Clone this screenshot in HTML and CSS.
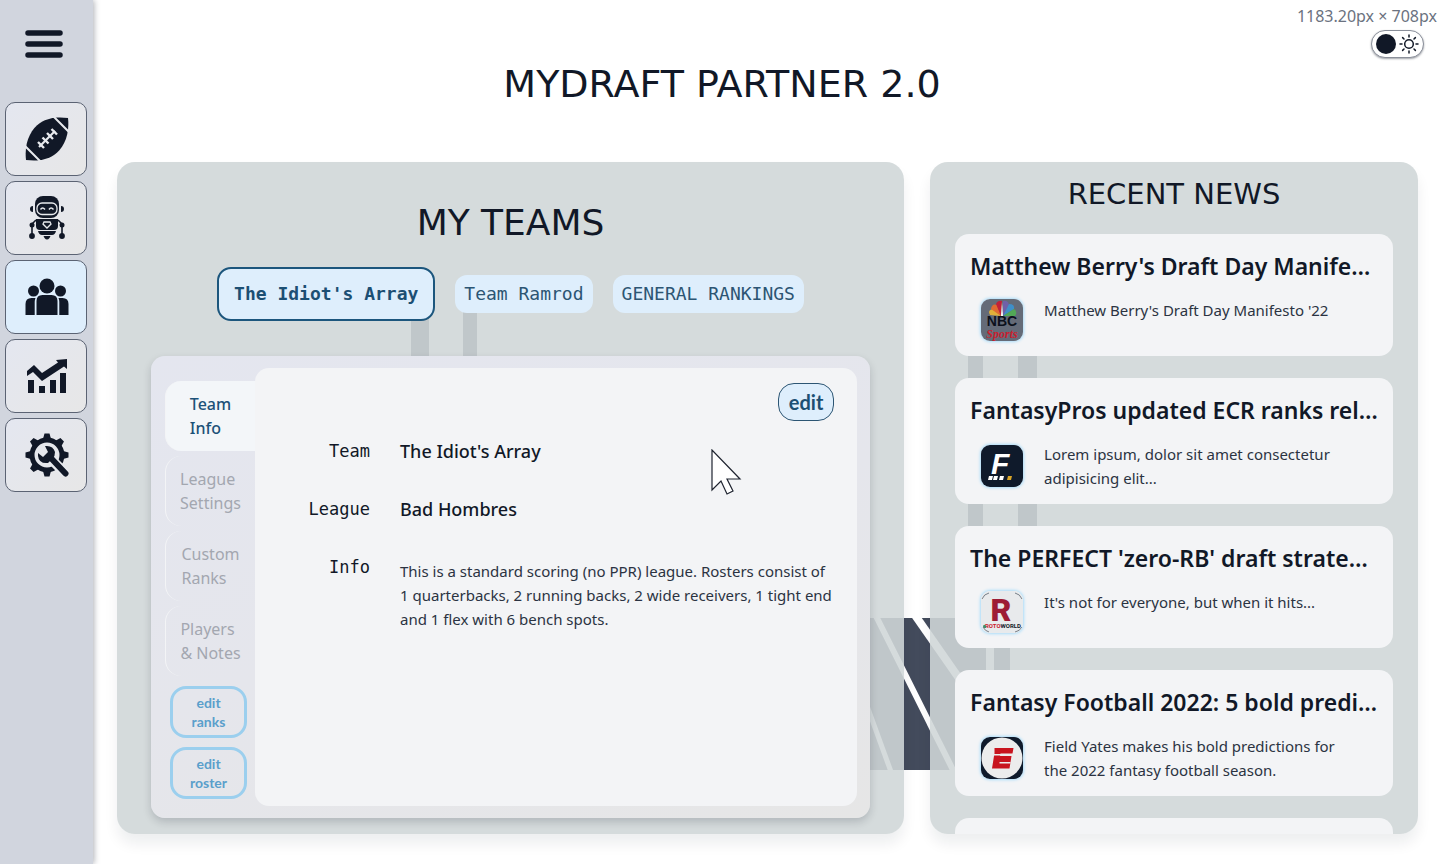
FILE: index.html
```html
<!DOCTYPE html>
<html lang="en">
<head>
<meta charset="utf-8">
<meta name="viewport" content="width=device-width, initial-scale=1">
<title>MyDraft Partner 2.0</title>
<link rel="stylesheet" href="styles.css">
</head>
<body>
<svg class="field-art" width="640" height="480" viewBox="0 0 640 480" aria-hidden="true">
  <g fill="#434b5c">
    <path d="M11 0h18v56H11zM63 0h14v56H63z"/>
    <path d="M568 50h15v178h-15zM618 50h19v178h-19z"/>
    <path d="M430 318h156v152H430zM594 318h16v152h-16z"/>
  </g>
  <g stroke="#fff" fill="none">
    <path d="M472 308L558 480" stroke-width="6"/>
    <path d="M510 308L570 394" stroke-width="8"/>
    <path d="M454 370L494 480" stroke-width="5"/>
  </g>
</svg>
<div class="app">
  <nav class="sidebar" aria-label="Main">
    <button class="menu" type="button" aria-label="Menu">
      <svg width="38" height="28" viewBox="0 0 38 28"><path d="M3 3h32M3 14h32M3 25h32" stroke="#111827" stroke-width="5.5" stroke-linecap="round"/></svg>
    </button>
    <button class="nav-item" type="button" aria-label="Draft">
      <svg width="44" height="44" viewBox="0 0 44 44">
        <path d="M1 43C-1 25 6 12 15 6C24 0 34 0 43 1C45 19 38 32 29 38C20 44 10 44 1 43Z" fill="#111827"/>
        <g stroke="#e8eaee" fill="none"><path d="M28 -1L45 16M-1 28L16 45" stroke-width="2"/><path d="M14 30L30 14" stroke-width="2.2"/><path d="M13 25l6 6M17.500 20.500l6 6M22 16l6 6M26.500 12l5.500 5.500" stroke-width="2.400"/></g>
      </svg>
    </button>
    <button class="nav-item" type="button" aria-label="Bot">
      <svg width="36" height="44" viewBox="0 0 36 44" fill="#111827">
        <rect x="6" y="0" width="24" height="22" rx="8"/><path d="M4 10v6q-3 0-3-3t3-3zM32 10v6q3 0 3-3t-3-3z"/>
        <rect x="8" y="7" width="20" height="11.500" rx="5" fill="none" stroke="#e8eaee" stroke-width="1.300"/>
        <path d="M11.500 13.500q2-3 4.500 0M20 13.500q2-3 4.500 0" fill="none" stroke="#e8eaee" stroke-width="1.500"/>
        <path d="M7 23h22v7q0 4-4 4H11q-4 0-4-4zM9 35h18q-1 4-4 4H13q-3 0-4-4zM14.500 40h7l-1 2q-2.500 3-5 0z"/>
        <path d="M15 26h6l1 2-4 4-4-4z" fill="none" stroke="#e8eaee" stroke-width="1.300"/>
        <path d="M7 24L3 28v10M29 24l4 4v10" fill="none" stroke="#111827" stroke-width="1.600"/><circle cx="3" cy="29" r="2.500"/><circle cx="33" cy="29" r="2.500"/><circle cx="3" cy="40" r="2.900"/><circle cx="33" cy="40" r="2.900"/>
      </svg>
    </button>
    <button class="nav-item active" type="button" aria-label="Teams" aria-current="page">
      <svg width="44" height="38" viewBox="0 0 44 38" fill="#111827">
        <circle cx="22" cy="8" r="7.500"/><circle cx="8.500" cy="13" r="5.500"/><circle cx="35.500" cy="13" r="5.500"/>
        <path d="M11.500 37V23q0-6 6-6h9q6 0 6 6v14zM0.500 37V26q0-6 6-6h4q-.8 2-.8 4v13zM43.500 37V26q0-6-6-6h-4q.8 2 .8 4v13z"/>
      </svg>
    </button>
    <button class="nav-item" type="button" aria-label="Stats">
      <svg width="40" height="34" viewBox="0 0 40 34" fill="#111827">
        <path d="M0 12L7 6 15 14 31 3.500 29 1 40 0v10l-3-2.500L15 22 6 13 0 17zM1 21h6v13H1zM12 27h6v7h-6zM23 21h6v13h-6zM33 14h6v20h-6z"/>
      </svg>
    </button>
    <button class="nav-item" type="button" aria-label="Settings">
      <svg width="44" height="44" viewBox="0 0 44 44">
        <circle cx="22" cy="22" r="15" fill="none" stroke="#111827" stroke-width="5"/>
        <g fill="#111827">
          <path id="tooth" d="M18 6l1.500-5.500h5L26 6z"/>
          <use href="#tooth" transform="rotate(45 22 22)"/><use href="#tooth" transform="rotate(90 22 22)"/><use href="#tooth" transform="rotate(180 22 22)"/><use href="#tooth" transform="rotate(225 22 22)"/><use href="#tooth" transform="rotate(270 22 22)"/><use href="#tooth" transform="rotate(315 22 22)"/>
        </g>
        <path d="M22 22L41 41" stroke="#e8eaee" stroke-width="10"/>
        <path d="M24 23L40.500 40.500" stroke="#111827" stroke-width="6" stroke-linecap="round"/>
        <path d="M20 13q8-1 10 6 0 4-2 6l-5 5q-9 1-10-7v-3l5 4 5-5z" fill="#111827"/>
      </svg>
    </button>
  </nav>
  <main class="main">
    <header class="header">
      <h1>MYDRAFT PARTNER 2.0</h1>
      <div class="corner">
        <span>1183.20px × 708px</span>
        <label class="theme" aria-label="Light theme">
          <input type="checkbox">
          <span class="knob"></span>
          <svg width="20" height="20" viewBox="0 0 20 20" fill="none" stroke="#111827" stroke-width="1.500" stroke-linecap="round"><circle cx="10" cy="10" r="4.300"/><path d="M10 1v2M10 17v2M1 10h2M17 10h2M3.600 3.600L5 5M15 15l1.400 1.400M16.400 3.600L15 5M5 15l-1.400 1.400"/></svg>
        </label>
      </div>
    </header>
    <div class="panels">
      <section class="panel teams">
        <h2>MY TEAMS</h2>
        <div class="team-tabs">
          <button class="team-tab current" type="button">The Idiot's Array</button>
          <button class="team-tab" type="button">Team Ramrod</button>
          <button class="team-tab" type="button">GENERAL RANKINGS</button>
        </div>
        <div class="team-card">
          <div class="side">
            <button class="side-tab current" type="button"><span>Team<br>Info</span></button>
            <button class="side-tab" type="button"><span>League<br>Settings</span></button>
            <button class="side-tab" type="button"><span>Custom<br>Ranks</span></button>
            <button class="side-tab" type="button"><span>Players<br>&amp; Notes</span></button>
            <button class="side-edit" type="button">edit<br>ranks</button>
            <button class="side-edit" type="button">edit<br>roster</button>
          </div>
          <div class="details">
            <button class="edit" type="button">edit</button>
            <dl>
              <dt>Team</dt><dd class="strong">The Idiot's Array</dd>
              <dt>League</dt><dd class="strong">Bad Hombres</dd>
              <dt>Info</dt><dd class="info">This is a standard scoring (no PPR) league. Rosters consist of<br>1 quarterbacks, 2 running backs, 2 wide receivers, 1 tight end<br>and 1 flex with 6 bench spots.</dd>
            </dl>
          </div>
        </div>
      </section>
      <section class="panel news">
        <h2>RECENT NEWS</h2>
        <article class="story">
          <h3>Matthew Berry's Draft Day Manife…</h3>
          <div class="story-row">
            <svg class="logo" viewBox="0 0 42 42" aria-hidden="true"><rect width="42" height="42" fill="#646b78"/>
              <g><path d="M20 17L9 16q-3-5 3-6z" fill="#e0b03a"/><path d="M20 17L10 10q1-6 6-4z" fill="#df6a32"/><path d="M20 17L15 5q2-4 6-3z" fill="#c22138"/><path d="M22 17L22 2q5-1 6 4z" fill="#7060a8"/><path d="M22 17L28 5q6 0 5 5z" fill="#3f8fc8"/><path d="M22 17L33 10q4 3 1 7z" fill="#52a857"/><path d="M20 17L21 3l1 14z" fill="#fff"/></g>
              <text x="21" y="27" text-anchor="middle" class="nbc">NBC</text><text x="21" y="39" text-anchor="middle" class="sports">Sports</text></svg>
            <p>Matthew Berry's Draft Day Manifesto '22</p>
          </div>
        </article>
        <article class="story">
          <h3>FantasyPros updated ECR ranks rel…</h3>
          <div class="story-row">
            <svg class="logo" viewBox="0 0 42 42" aria-hidden="true"><rect width="42" height="42" fill="#0f1a2b"/><text x="10" y="29" class="fp">F</text><path d="M8 31h4l-1 4H7zM13 31h4l-1 4h-4zM19 31h4l-1 4h-4z" fill="#fff"/><path d="M27 31h4l-1 4h-4z" fill="#d9a528"/></svg>
            <p>Lorem ipsum, dolor sit amet consectetur<br>adipisicing elit...</p>
          </div>
        </article>
        <article class="story">
          <h3>The PERFECT 'zero-RB' draft strate…</h3>
          <div class="story-row">
            <svg class="logo" viewBox="0 0 42 42" aria-hidden="true"><rect width="42" height="42" fill="#e8eaec"/><text x="20" y="30" text-anchor="middle" class="roto-r">R</text><text x="22" y="37" text-anchor="middle" class="roto">ROTO<tspan fill="#111827">WORLD</tspan></text><path d="M2 37q0-4 2-3t1 3z" fill="#3f8f6a"/><path d="M1 8q2-5 7-6M34 2q5 1 7 6M2 36q2 4 6 5M34 41q5-1 7-5" fill="none" stroke="#777f88"/></svg>
            <p>It's not for everyone, but when it hits...</p>
          </div>
        </article>
        <article class="story">
          <h3>Fantasy Football 2022: 5 bold predi…</h3>
          <div class="story-row">
            <svg class="logo" viewBox="0 0 42 42" aria-hidden="true"><rect width="42" height="42" fill="#0f1a2b"/><circle cx="21" cy="21" r="20.500" fill="#ececec"/><path d="M13.500 11h19l-1 5.500H19.500L19 19h11.500l-2 12.500H11l2-12.500h0l.5-2.500z" fill="#c8141e"/><path d="M12 17.700h20M18.500 25.700h11" stroke="#ececec" stroke-width="1.500"/></svg>
            <p>Field Yates makes his bold predictions for<br>the 2022 fantasy football season.</p>
          </div>
        </article>
        <article class="story next"></article>
      </section>
    </div>
  </main>
</div>
<svg class="cursor" width="32" height="48" viewBox="0 0 32 48" aria-hidden="true"><path d="M1 1V41L10 32L16 45L22 42L16 30H29Z" fill="#fff" stroke="#1f2430" stroke-width="1.200"/></svg>
</body>
</html>
```
FILE: styles.css
```css
* { box-sizing: border-box; }
body {
  margin: 0;
  background: #fff;
  color: #111827;
  font-family: "Noto Sans", "Open Sans", sans-serif;
  font-size: 16px;
  line-height: 24px;
}
button { font: inherit; color: inherit; margin: 0; padding: 0; border: 0; background: none; cursor: pointer; }
svg { display: block; flex: none; }
h1, h2, h3, p, dl, dd { margin: 0; }

.field-art { position: absolute; left: 400px; top: 300px; z-index: -1; }
.cursor { position: absolute; left: 711px; top: 449px; pointer-events: none; }

.app { display: flex; height: 100vh; min-height: 700px; }
.sidebar {
  flex: none;
  width: 93px;
  padding: 30px 6px 0 5px;
  display: flex;
  flex-direction: column;
  gap: 5px;
  background: #d1d5de;
  box-shadow: 1px 0 6px rgba(17, 24, 39, .35);
}
.menu { align-self: center; margin: 0 4px 39px 0; }
.nav-item {
  height: 74px;
  display: flex;
  align-items: center;
  justify-content: center;
  padding-left: 2px;
  border: 1px solid #5b6373;
  border-radius: 10px;
  background: linear-gradient(135deg, #e4e7f0, #e7e7e7);
}
.nav-item.active { background: #deeefc; }

.main { flex: 1; min-width: 0; display: flex; flex-direction: column; padding: 0 26px 30px 24px; }
/* the title is centred on the window, not on the column beside the sidebar */
.header { flex: none; height: 162px; margin: 0 -26px 0 -117px; padding-top: 60px; text-align: center; pointer-events: none; }
h1, h2 { font-family: "DejaVu Sans", sans-serif; font-weight: 400; }
h1 { font-size: 38px; line-height: 48px; }
.corner {
  position: absolute;
  top: 4px;
  right: 7px;
  display: flex;
  flex-direction: column;
  align-items: flex-end;
  gap: 2px;
  color: #6b7280;
  pointer-events: auto;
}
.theme {
  display: flex;
  align-items: center;
  gap: 3px;
  height: 28px;
  margin-right: 13px;
  padding: 0 4px;
  border: 1px solid #8a8f9a;
  border-radius: 14px;
  background: #fff;
  box-shadow: 0 1px 2px rgba(17, 24, 39, .4);
}
.theme input { position: absolute; opacity: 0; }
.knob { width: 20px; height: 20px; border-radius: 50%; background: #111827; }

.panels { flex: 1; min-height: 0; display: grid; grid-template-columns: 1.613fr 1fr; gap: 26px; }
.panel {
  min-width: 0;
  border-radius: 18px;
  background: rgba(208, 214, 216, .89);
  box-shadow: 0 10px 14px rgba(17, 24, 39, .07);
}

.teams { display: flex; flex-direction: column; padding: 40px 34px 16px; }
.teams h2 { font-size: 36px; line-height: 42px; text-align: center; }
.team-tabs {
  display: flex;
  align-items: center;
  justify-content: center;
  gap: 20px;
  margin: 23px 0 35px;
  font-family: "DejaVu Sans Mono", monospace;
  font-size: 18px;
  color: #2c5573;
}
.team-tab { height: 38px; padding: 0 9px; border-radius: 12px; background: #deeefc; }
.team-tab.current {
  height: 54px;
  padding: 0 15px;
  border: 2px solid #1c567d;
  border-radius: 14px;
  color: #1c4f73;
  font-weight: 700;
}
.team-card {
  flex: 1;
  display: flex;
  padding: 12px 13px 12px 14px;
  border-radius: 14px;
  background: linear-gradient(160deg, #e4e6ef, #e5e6ec 50%, #e6e6e6);
  box-shadow: 0 4px 8px rgba(17, 24, 39, .18);
}
.side { width: 90px; flex: none; display: flex; flex-direction: column; padding-top: 13px; gap: 5px; }
.side-tab {
  height: 70px;
  display: flex;
  align-items: center;
  justify-content: center;
  text-align: left;
  border-left: 1px solid #f3f4f6;
  border-radius: 16px 0 0 16px;
  color: #a3a7b0;
}
.side-tab.current { background: #f3f6f9; color: #1c5178; font-weight: 500; }
.side-edit {
  height: 52px;
  margin: 0 8px 4px 5px;
  border: 3px solid #9bcfee;
  border-radius: 16px;
  color: #5a9fcb;
  font-family: Lato, sans-serif;
  font-size: 14px;
  font-weight: 700;
  line-height: 19px;
}
.side-tab + .side-edit { margin-top: 5px; }
.details { flex: 1; min-width: 0; border-radius: 14px; background: #f3f4f6; padding: 15px 23px 0 0; }
.edit {
  display: block;
  width: 56px;
  height: 38px;
  margin-left: auto;
  border: 1px solid #2c5573;
  border-radius: 16px;
  background: #deeefc;
  color: #1c4f73;
  font-family: Lato, sans-serif;
  font-size: 20px;
  font-weight: 700;
}
dl { display: grid; grid-template-columns: 115px 1fr; column-gap: 30px; row-gap: 34px; margin-top: 18px; }
dt { text-align: right; font-family: "DejaVu Sans Mono", monospace; font-size: 17px; }
.strong { font-size: 18px; font-weight: 500; }
.info { padding-top: 4px; font-size: 15px; color: #2b3342; white-space: nowrap; }

.news { overflow: hidden; padding: 16px 25px 0; }
.news h2 { font-size: 29px; line-height: 32px; text-align: center; margin-bottom: 24px; }
.story { margin-bottom: 22px; padding: 16px 15px 14px; border-radius: 14px; background: #f3f4f6; }
.story h3 { font-size: 23px; line-height: 32px; font-weight: 600; white-space: nowrap; }
.story-row { display: flex; align-items: center; gap: 21px; min-height: 44px; margin-top: 16px; padding-left: 11px; }
.story-row p { align-self: flex-start; font-size: 15px; color: #2b3342; white-space: nowrap; }
.next { height: 122px; }
.logo { width: 42px; height: 42px; border-radius: 9px; box-shadow: 0 0 3px 1px #a9dcf9; }
.nbc { font: 700 14px "Liberation Sans", sans-serif; fill: #0c111c; }
.sports { font: italic 700 12px "Liberation Serif", serif; fill: #c8202e; }
.fp { font: italic 700 30px "Liberation Sans", sans-serif; fill: #fff; }
.roto-r { font: 900 32px Roboto, sans-serif; fill: #9d1c35; }
.roto { font: 700 6px Roboto, sans-serif; fill: #c8202e; }
```
